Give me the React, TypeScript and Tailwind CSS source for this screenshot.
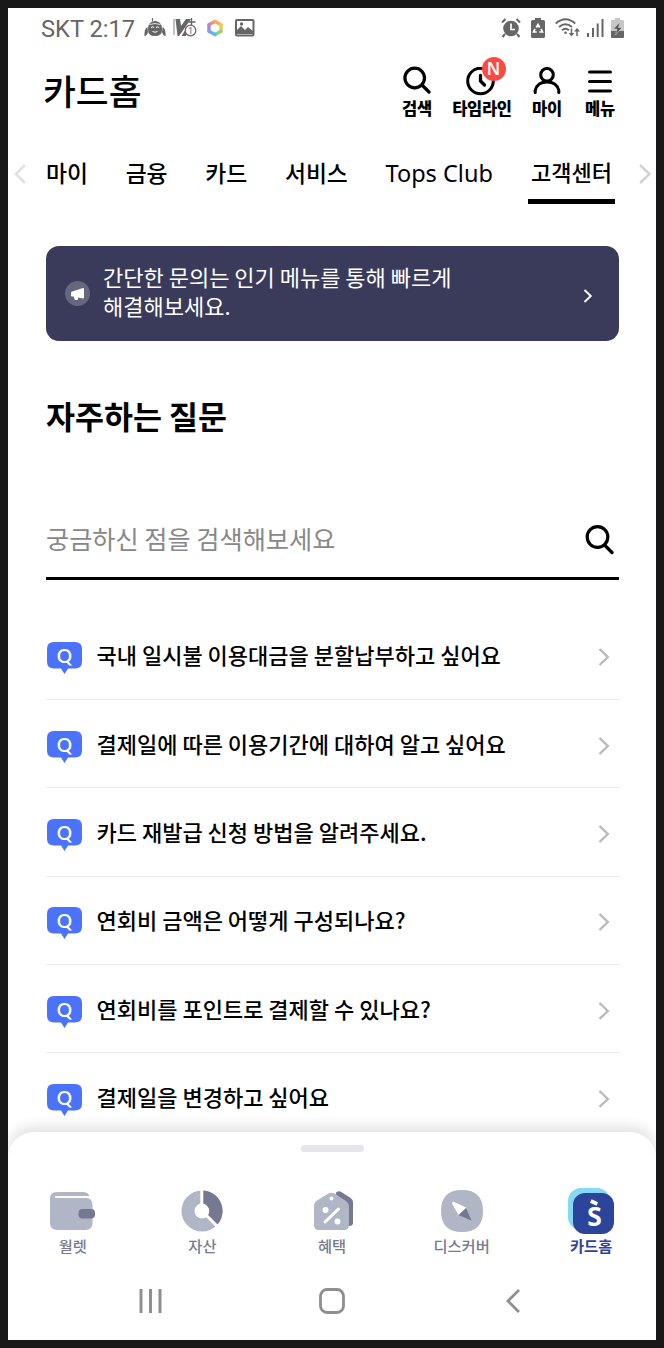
import type { ReactNode } from 'react';

const tabs = ['마이', '금융', '카드', '서비스', 'Tops Club'];

const questions = [
  '국내 일시불 이용대금을 분할납부하고 싶어요',
  '결제일에 따른 이용기간에 대하여 알고 싶어요',
  '카드 재발급 신청 방법을 알려주세요.',
  '연회비 금액은 어떻게 구성되나요?',
  '연회비를 포인트로 결제할 수 있나요?',
  '결제일을 변경하고 싶어요',
];

function StatusBar() {
  return (
    <div className="flex h-10 shrink-0 items-center justify-between pr-8 pl-8 text-[#666]">
      <div className="flex items-center">
        <span className="mt-[3px] ml-[1px] w-[93px] font-[Roboto] text-[23.700px] leading-none whitespace-nowrap">SKT 2:17</span>
        {/* Robot */}
        <svg className="ml-[10px]" width="22" height="20" viewBox="0 0 22 20" fill="currentColor">
          <path d="M8 3V0h1v3z" />
          <path d="M4 10a7 7 0 0 1 14 0v2q0 6-7 6t-7-6z" />
          <path d="M3.300 9Q0 11 .5 18q2.500 0 3.500-4zM18.700 9q3.300 2 2.800 9-2.500 0-3.500-4z" />
          <path d="M7 9.500q1.500-1.200 3 0M12 9.500q1.500-1.200 3 0M8.500 13.500q2.500 1.500 5 0" stroke="white" strokeWidth="1" fill="none" />
          <path d="M5.500 6.500q5.500-2 11 0" stroke="white" strokeWidth=".8" fill="none" />
        </svg>
        {/* V mark with a counter */}
        <svg className="ml-[7px]" width="24" height="20" viewBox="0 0 24 20">
          <path d="M2.500 1H7l1 7 5-7h5L6 18H4.500z" fill="currentColor" />
          <path d="M1 1v16" stroke="currentColor" strokeWidth=".8" />
          <path d="M18.500 0v7M15.500 4h7" stroke="currentColor" strokeWidth="1.300" />
          <path d="M8.500 18 13 11v7z" fill="currentColor" />
          <circle cx="17.500" cy="12.500" r="5.300" fill="white" stroke="currentColor" strokeWidth="1.200" />
          <text x="17.500" y="16" textAnchor="middle" fontSize="9" fontFamily="Roboto" fill="currentColor">1</text>
        </svg>
        <svg className="ml-[9px]" width="18" height="18" viewBox="0 0 18 18" fill="none" strokeWidth="3.400" strokeLinecap="round">
          <path d="M3 5.500 9 2.500" stroke="#ee8a8a" />
          <path d="m9 2.500 6 3.200" stroke="#f6ab57" />
          <path d="M15 5.700v6.600" stroke="#e6cf4b" />
          <path d="m15 12.300-6 3.200" stroke="#8ed27a" />
          <path d="m9 15.500-6-3.200" stroke="#5ab9ee" />
          <path d="M3 12.300V5.700" stroke="#a38be6" />
        </svg>
        <svg className="ml-[11px]" width="20" height="18" viewBox="0 0 20 18">
          <rect x="1" y="1" width="17.500" height="15.500" rx="1" fill="none" stroke="currentColor" strokeWidth="2" />
          <path d="M2 14v-3l4-4 4 4 3-3 5 4v3H2z" fill="currentColor" />
          <circle cx="6.500" cy="5" r="1.700" fill="currentColor" />
        </svg>
      </div>
      <div className="flex items-center">
        <svg width="20" height="20" viewBox="0 0 20 20">
          <circle cx="10" cy="10.500" r="7.800" fill="currentColor" />
          <path d="M1 4.500 4.500 1M19 4.500 15.500 1M4 16l-2.500 3M16 16l2.500 3" stroke="currentColor" strokeWidth="2" />
          <path d="M10 5.500v6h4" fill="none" stroke="white" strokeWidth="1.700" />
        </svg>
        <svg className="ml-[10px]" width="14" height="20" viewBox="0 0 14 20">
          <path d="M4 0h6v2h2.500q1.500 0 1.500 1.500v15q0 1.500-1.500 1.500h-11Q0 20 0 18.500v-15Q0 2 1.500 2H4z" fill="currentColor" />
          <path d="M5.300 9.500 7 6.500l1.700 3M10 11l1.500 3H8.300M5.700 14H2.500L4 11" fill="none" stroke="white" strokeWidth="1.700" />
        </svg>
        <svg className="ml-[10px]" width="26" height="20" viewBox="0 0 26 20" fill="none" stroke="currentColor" strokeWidth="1.900">
          <path d="M.7 5.500q9.800-8.500 19.600 0M4 9q6.500-5.500 13 0M7 12.300q3.500-3 7 0" />
          <circle cx="10.500" cy="14.800" r="1.300" fill="currentColor" stroke="none" />
          <path d="M16.500 10.500v6M22 18v-6" strokeWidth="1.500" />
          <path d="M13.600 15h5.800l-2.900 3.500zM19 13.500h6L22 10z" fill="currentColor" stroke="none" />
        </svg>
        <svg className="ml-[6px]" width="17" height="18" viewBox="0 0 17 18" stroke="currentColor" strokeWidth="2">
          <path d="M1 14v4M6 9v9M10.700 4.500V18M15.500 0v18" />
        </svg>
        <svg className="ml-[7px]" width="13" height="20" viewBox="0 0 13 20">
          <path d="M4 0h5v2h3q1 0 1 1v16q0 1-1 1H1q-1 0-1-1V3q0-1 1-1h3z" fill="#c6c6c6" />
          <path d="M0 13h13v6q0 1-1 1H1q-1 0-1-1z" fill="currentColor" />
          <path d="M9 4 2.500 11H6l-1.500 6L11 9.500H7.500z" fill="#555" stroke="#ddd" strokeWidth=".5" />
        </svg>
      </div>
    </div>
  );
}

function HeaderAction({ label, className, children }: { label: string; className: string; children: ReactNode }) {
  return (
    <button className={`flex flex-col items-center ${className}`}>
      <span className="flex h-8 items-center justify-center">{children}</span>
      <span className="text-[16.500px] leading-[22px] font-black tracking-[-0.3px] whitespace-nowrap">{label}</span>
    </button>
  );
}

function Header() {
  return (
    <header className="flex h-[82px] shrink-0 items-start justify-between pr-[41px] pl-[35px]">
      <h1 className="mt-[20px] text-[35.700px] leading-[44px] font-medium">카드홈</h1>
      <div className="mt-[17px] flex">
        <HeaderAction label="검색" className="w-[30px]">
          <svg className="-mt-[2px]" width="28" height="28" viewBox="0 0 28 28" fill="none" stroke="black" strokeWidth="3.200" strokeLinecap="round">
            <circle cx="11.700" cy="12" r="9.800" />
            <path d="m19 19 7 7" />
          </svg>
        </HeaderAction>
        <HeaderAction label="타임라인" className="ml-5 w-[60px]">
          <span className="relative mr-[4px] block">
            <svg width="29" height="29" viewBox="0 0 29 29" fill="none" stroke="black" strokeWidth="3" strokeLinecap="round">
              <circle cx="14.500" cy="14" r="12.800" />
              <path d="M14.500 8.500V14l4 4" strokeWidth="3.300" />
            </svg>
            <span className="absolute -top-[10px] left-[16px] flex h-6 w-6 items-center justify-center rounded-full bg-[#fa4a45] font-['Noto_Sans'] text-[17px] font-semibold text-white">
              N
            </span>
          </span>
        </HeaderAction>
        <HeaderAction label="마이" className="ml-5 w-[30px]">
          <svg width="28" height="28" viewBox="0 0 28 28" fill="none" stroke="black" strokeWidth="3.100" strokeLinecap="round">
            <circle cx="14" cy="7.800" r="6.300" />
            <path d="M2.200 25.500v-2q2-8.500 11.800-8.500t11.800 8.500v2" />
          </svg>
        </HeaderAction>
        <HeaderAction label="메뉴" className="ml-[23px] w-[30px]">
          <svg width="24" height="24" viewBox="0 0 24 24" stroke="black" strokeWidth="3.200" strokeLinecap="round">
            <path d="M1.600 3h20.800M1.600 12.500h20.800M1.600 22h20.800" />
          </svg>
        </HeaderAction>
      </div>
    </header>
  );
}

function Tabs() {
  return (
    <nav className="flex h-[74px] shrink-0 pl-[6px]">
      <svg className="mt-[34px]" width="12" height="20" viewBox="0 0 12 20" fill="none" stroke="#e0e0e0" strokeWidth="2.500">
        <path d="M11 1 2 10l9 9" />
      </svg>
      <div className="ml-[20px] flex gap-[37.700px] text-[22.800px] leading-[34px] font-medium">
        {tabs.map((tab) => (
          <span key={tab} className="mt-[26px] whitespace-nowrap">
            {tab === 'Tops Club' ? <span className="font-['Noto_Sans'] text-[23.500px] font-normal">{tab}</span> : tab}
          </span>
        ))}
      </div>
      <div className="mt-[24px] ml-auto h-[50px] w-[87px] shrink-0 border-b-[5px] border-black text-center text-[22px] leading-[34px] font-medium whitespace-nowrap">
        고객센터
      </div>
      <svg className="mt-[34px] mr-[5px] ml-[23px] shrink-0" width="13" height="20" viewBox="0 0 13 20" fill="none" stroke="#d2d2d2" strokeWidth="2.500">
        <path d="m2 1 9.500 9L2 19" />
      </svg>
    </nav>
  );
}

function Banner() {
  return (
    <div className="mt-[42px] flex h-[95px] items-center rounded-[13px] bg-[#3a3b5a] pr-[26px] pl-[19px] text-white">
      <svg width="25" height="25" viewBox="0 0 25 25">
        <circle cx="12.500" cy="12.500" r="12.500" fill="#66677f" />
        <path d="M6.500 10.800 18 7q1 0 1 1v8.500q0 1-1 1l-5-1v1.500q0 1-1 1h-1.500q-.8 0-1-.8l-.7-2.700H7q-1 0-1-1v-2.700q0-.8.500-1z" fill="white" />
      </svg>
      <p className="mb-[6px] ml-[13px] flex-1 text-[22px] leading-[29px]">
        간단한 문의는 인기 메뉴를 통해 빠르게
        <br />
        해결해보세요.
      </p>
      <svg className="mt-[4px]" width="10" height="14" viewBox="0 0 10 14" fill="none" stroke="white" strokeWidth="1.900">
        <path d="m1.500 1 6.300 6-6.300 6" />
      </svg>
    </div>
  );
}

function QuestionRow({ text }: { text: string }) {
  return (
    <li className="flex h-[88.400px] items-center border-b-[1.500px] border-[#e9e9e9] pr-[9px] pl-[1px]">
      <svg className="mt-[6px]" width="36" height="32" viewBox="0 0 36 32">
        <path d="M7 0h21q7 0 7 7v12.500q0 7-7 7h-7L17.500 32 14 26.500H7q-7 0-7-7V7q0-7 7-7z" fill="#4a72fb" />
        <text x="17.500" y="20.500" textAnchor="middle" fontSize="19" fontWeight="600" fontFamily="Lato, sans-serif" fill="white">Q</text>
      </svg>
      <span className="mb-[2px] ml-[13.500px] flex-1 text-[22px] leading-8 font-medium">{text}</span>
      <svg className="mt-[4px]" width="12" height="18" viewBox="0 0 12 18" fill="none" stroke="#bababa" strokeWidth="2.400">
        <path d="m1.500 1 8.300 8-8.300 8" />
      </svg>
    </li>
  );
}

function NavItem({ label, active = false, children }: { label: string; active?: boolean; children: ReactNode }) {
  return (
    <div className="flex w-[129.600px] flex-col items-center">
      <div className="flex h-[46px] items-center">{children}</div>
      <span className={`text-[15.300px] leading-[22px] ${active ? 'font-bold text-[#2d449b]' : 'font-medium text-[#777a92]'}`}>
        {label}
      </span>
    </div>
  );
}

function BottomSheet() {
  return (
    <footer className="relative -mt-6 flex h-[208px] shrink-0 flex-col items-center rounded-t-[26px] bg-white shadow-[0_-7px_12px_rgba(0,0,0,0.1)]">
      <div className="mt-[13px] h-[7px] w-[63px] shrink-0 rounded-full bg-[#e5e6ec]" />
      <div className="mt-[36px] flex w-full">
        <NavItem label="월렛">
          <svg width="45" height="40" viewBox="0 0 45 40">
            <path d="M7 1h26q5 0 6.500 4H7Q4.500 5 4.500 6T7 7h30q5.500 1 5.500 7v18q0 7-7 7H7q-7 0-7-7V8q0-7 7-7z" fill="#b0b6c6" />
            <rect x="28.500" y="18" width="16.500" height="9.500" rx="4" fill="#757890" />
          </svg>
        </NavItem>
        <NavItem label="자산">
          <svg width="42" height="42" viewBox="0 0 42 42">
            <circle cx="21" cy="21" r="14" fill="none" stroke="#b0b6c6" strokeWidth="13" />
            <path d="M21 .5A20.500 20.500 0 0 1 36 35L26.300 26A7.500 7.500 0 0 0 21 13.500z" fill="#757890" />
            <path d="M20.800 0v15M25 25l12 12" stroke="white" strokeWidth="3" />
          </svg>
        </NavItem>
        <NavItem label="혜택">
          <svg className="-mt-px ml-[5px]" width="41" height="42" viewBox="0 0 41 42">
            <path d="M22 2.500q3-2.500 6 0l8 5q3 2 3 5V33q0 3-4 3H25z" fill="#757890" />
            <path d="M14.500 3.500q3-1.500 6 0L32 11q3 2 3 5v19q0 5-5 5H5q-5 0-5-5V16q0-4 3-5.500z" fill="#b0b6c6" />
            <g fill="white">
              <circle cx="17.500" cy="8.500" r="2" />
              <circle cx="11.500" cy="20" r="3" />
              <circle cx="23.500" cy="31.500" r="3" />
            </g>
            <path d="M11 32 24.500 19" stroke="white" strokeWidth="3" strokeLinecap="round" />
          </svg>
        </NavItem>
        <NavItem label="디스커버">
          <svg width="42" height="42" viewBox="0 0 42 42">
            <path d="M21 0q21 0 21 21T21 42 0 21 21 0z" fill="#b0b6c6" />
            <path d="m12 12 13 6-7 7-6.500-11.500z" fill="white" stroke="white" strokeLinejoin="round" />
            <path d="m25 18 5.500 12.500L17.500 25z" fill="#757890" />
          </svg>
        </NavItem>
        <NavItem label="카드홈" active>
          <svg width="46" height="46" viewBox="0 0 46 46">
            <rect x="0" y="0" width="42" height="42" rx="13" fill="#86d9f4" />
            <rect x="5" y="5" width="41" height="41" rx="12" fill="#2d449b" />
            <text transform="translate(26.500 37.500) scale(.9 1)" textAnchor="middle" fontSize="34" fontWeight="600" fontFamily="Noto Sans" fill="white">s</text>
            <path d="m22.800 13 6.500 3" stroke="white" strokeWidth="3.600" />
          </svg>
        </NavItem>
      </div>
      <div className="mt-[32px] flex w-full items-center text-[#8f8f8f]">
        <svg className="ml-[130px]" width="26" height="26" viewBox="0 0 26 26" stroke="currentColor" strokeWidth="3">
          <path d="M3 1v24M12.500 1v24M22 1v24" />
        </svg>
        <svg className="ml-[155px]" width="26" height="26" viewBox="0 0 26 26" fill="none" stroke="currentColor" strokeWidth="2.800">
          <rect x="1.500" y="1.500" width="23" height="23" rx="6.500" />
        </svg>
        <svg className="ml-[160px]" width="16" height="26" viewBox="0 0 16 26" fill="none" stroke="currentColor" strokeWidth="2.800">
          <path d="M14 2 3 13l11 11" />
        </svg>
      </div>
    </footer>
  );
}

export default function App() {
  return (
    <div className="h-[1348px] w-[664px] bg-[#181818] p-2 font-['Noto_Sans_CJK_KR',sans-serif] text-black">
      <div className="flex h-full flex-col overflow-hidden bg-white">
        <StatusBar />
        <Header />
        <Tabs />
        <main className="min-h-0 flex-1 overflow-hidden pr-[37px] pl-[38px]">
          <Banner />
          <h2 className="mt-[51px] text-[31.500px] leading-[46px] font-bold">자주하는 질문</h2>
          <div className="mt-[62px] flex h-[80px] items-center justify-between border-b-[3px] border-black pr-[5px]">
            <span className="text-[25.200px] text-[#888]">궁금하신 점을 검색해보세요</span>
            <svg className="mt-[2px]" width="29" height="31" viewBox="0 0 29 31" fill="none" stroke="black" strokeWidth="3.200" strokeLinecap="round">
              <circle cx="12.500" cy="13" r="10.300" />
              <path d="m19.500 21 7.500 7.500" />
            </svg>
          </div>
          <ul className="mt-[31.500px]">
            {questions.map((q) => (
              <QuestionRow key={q} text={q} />
            ))}
          </ul>
        </main>
        <BottomSheet />
      </div>
    </div>
  );
}
